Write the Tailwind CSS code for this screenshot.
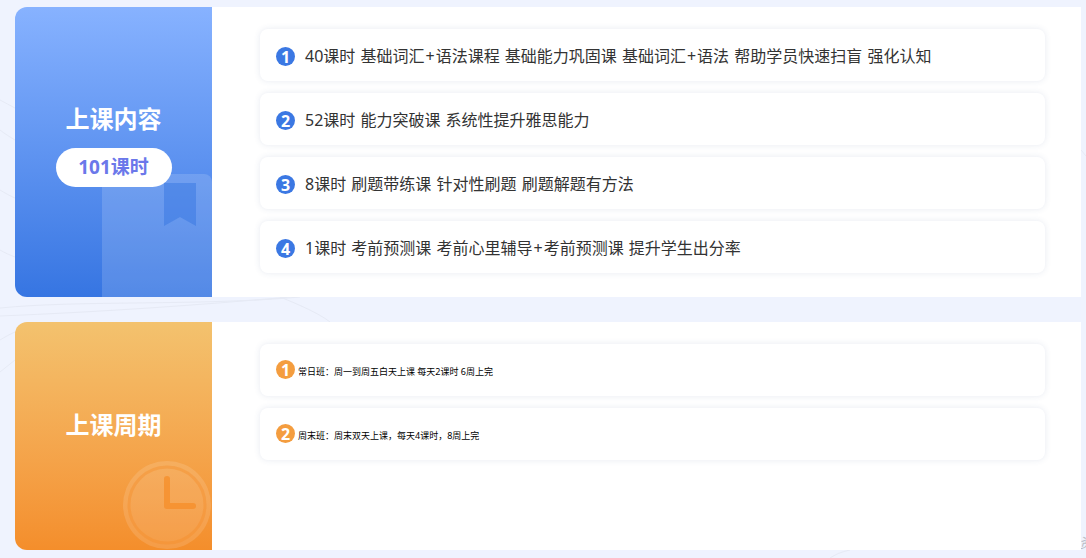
<!DOCTYPE html>
<html lang="zh-CN">
<head>
  <meta charset="UTF-8">
  <title>上课内容</title>
  <script src="https://cdn.jsdelivr.net/npm/@tailwindcss/browser@4"></script>
</head>
<body class="bg-[#eff3fe] font-['Noto_Sans','Noto_Sans_CJK_SC',sans-serif] overflow-hidden">
  <div class="relative w-[1086px] h-[558px] overflow-hidden pt-[7px] pl-[15px]">
    <!-- background lines -->
    <svg class="absolute left-0 top-0 pointer-events-none" width="1086" height="558" fill="none" stroke="#e6eaf5" stroke-width="1">
      <path d="M0 100 C5 103 10 105 15 108"/>
      <path d="M0 130 C5 134 10 137 15 140"/>
      <path d="M0 190 C5 193 10 196 15 198"/>
      <path d="M0 250 C5 253 10 255 15 257"/>
      <path d="M0 308 C80 300 200 306 300 297"/>
      <path d="M0 316 C100 312 200 305 290 297"/>
      <path d="M0 340 C5 337 10 334 15 332"/>
      <path d="M0 372 C5 368 10 364 15 360"/>
      <path d="M280 297 C300 305 320 314 330 322"/>
      <path d="M1081 150 L1086 156"/>
      <path d="M830 558 C835 555 840 552 850 550"/>
    </svg>
    <span class="absolute left-[1079px] top-[532px] text-[14px] italic text-[#b9bcc4]">资</span>

    <!-- 上课内容 -->
    <section class="relative flex w-[1066px] h-[290px]">
      <div class="relative flex flex-col items-center w-[197px] shrink-0 overflow-hidden rounded-l-xl bg-gradient-to-b from-[#87b2ff] to-[#3675e2]">
        <div class="absolute left-[87px] top-[167px] w-[110px] h-[140px] rounded-lg bg-white/15"></div>
        <svg class="absolute left-[149px] top-[176px]" width="32" height="44" viewBox="0 0 32 44"><path d="M0 0H32V43L16 34L0 43Z" fill="#3675e2" fill-opacity=".5"/></svg>
        <h2 class="relative mt-[94px] text-[24px] leading-[36px] font-bold text-white">上课内容</h2>
        <div class="relative mt-[11px] w-[116px] h-[39px] rounded-full bg-white flex items-center justify-center text-[19px] font-bold text-[#6b78ea]">101课时</div>
      </div>
      <div class="flex-1 bg-white pl-[48px] pt-[22px] pr-[36px]">
        <ul class="flex flex-col gap-3 text-[16px] text-[#333] [word-spacing:1px]">
          <li class="flex items-center h-[52px] pl-4 pt-[3px] rounded-lg bg-white shadow-[0_0_6px_rgba(60,80,140,0.12)]">
            <span class="flex items-center justify-center size-[19px] rounded-full bg-[#3b78e3] text-white text-[16px] font-bold mr-[10px]">1</span>
            <p class="-mt-[2px]">40课时 基础词汇<span class="mx-[1px]">+</span>语法课程 基础能力巩固课 基础词汇<span class="mx-[1px]">+</span>语法 帮助学员快速扫盲 强化认知</p>
          </li>
          <li class="flex items-center h-[52px] pl-4 pt-[3px] rounded-lg bg-white shadow-[0_0_6px_rgba(60,80,140,0.12)]">
            <span class="flex items-center justify-center size-[19px] rounded-full bg-[#3b78e3] text-white text-[16px] font-bold mr-[10px]">2</span>
            <p class="-mt-[2px]">52课时 能力突破课 系统性提升雅思能力</p>
          </li>
          <li class="flex items-center h-[52px] pl-4 pt-[3px] rounded-lg bg-white shadow-[0_0_6px_rgba(60,80,140,0.12)]">
            <span class="flex items-center justify-center size-[19px] rounded-full bg-[#3b78e3] text-white text-[16px] font-bold mr-[10px]">3</span>
            <p class="-mt-[2px]">8课时 刷题带练课 针对性刷题 刷题解题有方法</p>
          </li>
          <li class="flex items-center h-[52px] pl-4 pt-[3px] rounded-lg bg-white shadow-[0_0_6px_rgba(60,80,140,0.12)]">
            <span class="flex items-center justify-center size-[19px] rounded-full bg-[#3b78e3] text-white text-[16px] font-bold mr-[10px]">4</span>
            <p class="-mt-[2px]">1课时 考前预测课 考前心里辅导<span class="mx-[1px]">+</span>考前预测课 提升学生出分率</p>
          </li>
        </ul>
      </div>
    </section>

    <!-- 上课周期 -->
    <section class="relative flex w-[1066px] h-[228px] mt-[25px]">
      <div class="relative flex flex-col items-center w-[197px] shrink-0 overflow-hidden rounded-l-xl bg-gradient-to-b from-[#f3c26e] to-[#f48e2b]">
        <svg class="absolute left-[108px] top-[139px]" width="88" height="88" viewBox="0 0 88 88" fill="none">
          <circle cx="44" cy="44" r="44" fill="#fff" fill-opacity=".13"/>
          <circle cx="44" cy="44" r="38" stroke="#f58d28" stroke-opacity=".4" stroke-width="3"/>
          <path d="M44 18V45H70" stroke="#f58d28" stroke-opacity=".75" stroke-width="6" stroke-linecap="round" stroke-linejoin="round"/>
        </svg>
        <h2 class="relative mt-[85px] text-[24px] leading-[36px] font-bold text-white">上课周期</h2>
      </div>
      <div class="flex-1 bg-white pl-[48px] pt-[22px] pr-[36px]">
        <ul class="flex flex-col gap-3 text-[9px] text-black">
          <li class="flex items-center h-[52px] pl-4 rounded-lg bg-white shadow-[0_0_6px_rgba(60,80,140,0.12)]">
            <span class="flex items-center justify-center size-[19px] rounded-full bg-[#f49d3f] text-white text-[16px] font-bold mr-[3px] -mt-[1px]">1</span>
            <p class="mt-[4px]">常日班：周一到周五白天上课 每天2课时 6周上完</p>
          </li>
          <li class="flex items-center h-[52px] pl-4 rounded-lg bg-white shadow-[0_0_6px_rgba(60,80,140,0.12)]">
            <span class="flex items-center justify-center size-[19px] rounded-full bg-[#f49d3f] text-white text-[16px] font-bold mr-[3px] -mt-[1px]">2</span>
            <p class="mt-[4px]">周末班：周末双天上课，每天4课时，8周上完</p>
          </li>
        </ul>
      </div>
    </section>
  </div>
</body>
</html>
